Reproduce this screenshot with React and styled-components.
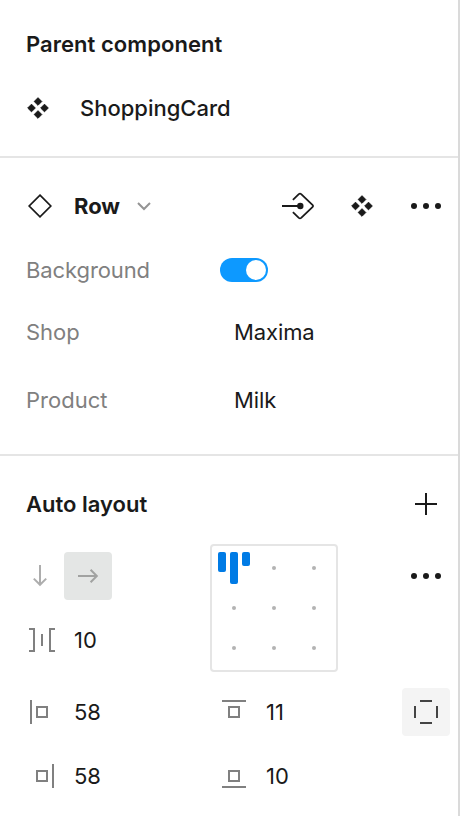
import React from "react";
import styled, { createGlobalStyle } from "styled-components";

const GlobalStyle = createGlobalStyle`
  *, *::before, *::after { box-sizing: border-box; }
  body { margin: 0; background: #fff; }
`;

const Panel = styled.main`
  width: 460px;
  height: 816px;
  overflow: hidden;
  background: #fff;
  border-right: 2px solid #dadada;
  color: #1a1a1a;
  font-family: Inter, sans-serif;
  font-size: 22px;
  line-height: 32px;
`;

const Section = styled.section`
  height: ${(p) => p.$height}px;
  padding-top: ${(p) => p.$top}px;
  border-bottom: ${(p) => (p.$last ? "none" : "2px solid #e5e5e5")};
`;

const Row = styled.div`
  display: flex;
  align-items: center;
  height: ${(p) => p.$height || 64}px;
  padding-left: ${(p) => (p.$icon ? 16 : 26)}px;
  padding-right: 8px;
`;

const Title = styled.h2`
  margin: 0;
  font-size: 22px;
  font-weight: 600;
  letter-spacing: ${(p) => p.$spacing || 0}px;
`;

const Name = styled.span`
  margin-left: ${(p) => p.$gap}px;
  font-weight: ${(p) => (p.$strong ? 700 : 500)};
`;

const Label = styled.span`
  width: ${(p) => p.$width}px;
  color: #808080;
  letter-spacing: ${(p) => p.$spacing || 0}px;
`;

const Value = styled.span`
  letter-spacing: -0.1px;
`;

const Actions = styled.div`
  display: flex;
  gap: ${(p) => p.$gap || 0}px;
  margin-left: auto;
`;

const IconButton = styled.button`
  display: flex;
  flex: none;
  align-items: center;
  justify-content: center;
  width: 48px;
  height: 48px;
  padding: 0;
  border: 0;
  border-radius: 4px;
  background: ${(p) => p.$fill || "transparent"};
`;

const Icon = styled.svg`
  display: block;
  flex: none;
  fill: none;
  stroke-width: 2;
`;

const Switch = styled.button`
  display: flex;
  justify-content: flex-end;
  width: 48px;
  height: 24px;
  padding: 2px;
  border: 0;
  border-radius: 12px;
  background: #0d99ff;
`;

const Knob = styled.span`
  width: 20px;
  height: 20px;
  border-radius: 50%;
  background: #fff;
`;

const LayoutGrid = styled.div`
  display: grid;
  grid-template-columns: 194px 192px 48px;
  grid-template-rows: 64px 64px 8px 64px 64px;
  align-items: center;
  padding: 8px 8px 0 16px;
`;

const Field = styled.div`
  display: flex;
  align-items: center;
  grid-column: ${(p) => p.$col};
  grid-row: ${(p) => p.$row};
`;

const FieldValue = styled.span`
  margin-left: ${(p) => p.$gap}px;
`;

const AlignmentBox = styled.div`
  grid-column: 2;
  grid-row: 1 / 3;
  display: grid;
  grid-template: repeat(3, 40px) / repeat(3, 40px);
  place-items: center;
  width: 128px;
  height: 128px;
  padding: 2px;
  border: 2px solid #e5e5e5;
  border-radius: 4px;
`;

const Dot = styled.span`
  width: 4px;
  height: 4px;
  border-radius: 50%;
  background: #b3b3b3;
`;

const Bars = styled.span`
  display: flex;
  align-items: flex-start;
  gap: 4px;
  height: 32px;
`;

const Bar = styled.span`
  width: 8px;
  height: ${(p) => p.$height}px;
  border-radius: 2px;
  background: #007be5;
`;

const Frame48 = ({ children, stroke = "#808080", ...rest }) => (
  <Icon width="48" height="48" viewBox="0 0 48 48" stroke={stroke} {...rest}>
    {children}
  </Icon>
);

const ComponentIcon = () => (
  <Icon width="24" height="24" viewBox="0 0 24 24">
    <path
      fill="#1a1a1a"
      stroke="#1a1a1a"
      strokeWidth="1"
      strokeLinejoin="round"
      d="M12 1.7l3.8 3.8-3.8 3.8-3.8-3.8zM5.5 8.2l3.8 3.8-3.8 3.8L1.7 12zM18.5 8.2l3.8 3.8-3.8 3.8-3.8-3.8zM12 14.7l3.8 3.8-3.8 3.8-3.8-3.8z"
    />
  </Icon>
);

const InstanceIcon = () => (
  <Frame48 stroke="#1a1a1a">
    <path strokeWidth="1.7" d="M24 13.2L34.8 24 24 34.8 13.2 24z" />
  </Frame48>
);

const ChevronIcon = () => (
  <Icon width="16" height="16" viewBox="0 0 16 16" stroke="#949494">
    <path d="M2 5l6 6 6-6" />
  </Icon>
);

const GoToMainIcon = () => (
  <Frame48 stroke="#1a1a1a">
    <path d="M8 24h18" />
    <path
      strokeWidth="1.8"
      d="M18.9 17.9l5.9-5.8q1.2-1 2.4 0L38.7 23.2q.8.8 0 1.6L27.2 35.9q-1.2 1-2.4 0l-5.9-5.8"
    />
    <circle cx="26.3" cy="24" r="3.2" fill="#1a1a1a" stroke="none" />
  </Frame48>
);

const MoreIcon = () => (
  <Frame48 stroke="none">
    <g fill="#1a1a1a">
      <circle cx="12" cy="24" r="3" />
      <circle cx="24" cy="24" r="3" />
      <circle cx="36" cy="24" r="3" />
    </g>
  </Frame48>
);

const PlusIcon = () => (
  <Frame48 stroke="#1a1a1a">
    <path d="M24 13v22M13 24h22" />
  </Frame48>
);

const ArrowDownIcon = () => (
  <Frame48 stroke="#adadad">
    <path d="M24 13v20M17.8 26.6l6.2 6.2 6.2-6.2" />
  </Frame48>
);

const ArrowRightIcon = () => (
  <Frame48 stroke="#a1a2a1">
    <path d="M14 24h19M26.6 17.8l6.2 6.2-6.2 6.2" />
  </Frame48>
);

const SpacingIcon = () => (
  <Frame48>
    <path d="M13 13h5v22h-5M39 13h-5v22h5M26 18v12" />
  </Frame48>
);

const PadLeftIcon = () => (
  <Frame48>
    <path d="M15 12v24M21 19h10v10H21z" />
  </Frame48>
);

const PadRightIcon = () => (
  <Frame48>
    <path d="M37 12v24M21 19h10v10H21z" />
  </Frame48>
);

const PadTopIcon = () => (
  <Frame48>
    <path d="M12 13h24M19 19h10v10H19z" />
  </Frame48>
);

const PadBottomIcon = () => (
  <Frame48>
    <path d="M12 35h24M19 19h10v10H19z" />
  </Frame48>
);

const SidesIcon = () => (
  <Frame48 stroke="#444">
    <path d="M18 13h12M18 35h12M13 18v12M35 18v12" />
  </Frame48>
);

const NameChevron = styled.span`
  display: flex;
  margin-left: 16px;
`;

export default function App() {
  return (
    <>
      <GlobalStyle />
      <Panel>
        <Section $height={158} $top={12}>
          <Row>
            <Title $spacing={0.05}>Parent component</Title>
          </Row>
          <Row>
            <ComponentIcon />
            <Name $gap={30}>ShoppingCard</Name>
          </Row>
        </Section>

        <Section $height={298} $top={16}>
          <Row $icon>
            <InstanceIcon />
            <Name $gap={10} $strong>Row</Name>
            <NameChevron>
              <ChevronIcon />
            </NameChevron>
            <Actions $gap={16}>
              <IconButton aria-label="Go to main component">
                <GoToMainIcon />
              </IconButton>
              <IconButton aria-label="Swap component">
                <ComponentIcon />
              </IconButton>
              <IconButton aria-label="More options">
                <MoreIcon />
              </IconButton>
            </Actions>
          </Row>
          <Row>
            <Label $width={194} $spacing={-0.1}>Background</Label>
            <Switch role="switch" aria-checked="true" aria-label="Background">
              <Knob />
            </Switch>
          </Row>
          <Row $height={60}>
            <Label $width={208}>Shop</Label>
            <Value>Maxima</Value>
          </Row>
          <Row $height={76}>
            <Label $width={208}>Product</Label>
            <Value>Milk</Value>
          </Row>
        </Section>

        <Section $height={360} $top={16} $last>
          <Row>
            <Title>Auto layout</Title>
            <Actions>
              <IconButton aria-label="Add">
                <PlusIcon />
              </IconButton>
            </Actions>
          </Row>
          <LayoutGrid>
            <Field $col={1} $row={1}>
              <IconButton aria-label="Vertical">
                <ArrowDownIcon />
              </IconButton>
              <IconButton aria-label="Horizontal" $fill="#e4e6e5">
                <ArrowRightIcon />
              </IconButton>
            </Field>
            <AlignmentBox>
              <Bars>
                <Bar $height={20} />
                <Bar $height={32} />
                <Bar $height={14} />
              </Bars>
              {Array.from({ length: 8 }, (_, i) => (
                <Dot key={i} />
              ))}
            </AlignmentBox>
            <Field $col={3} $row={1}>
              <IconButton aria-label="More layout options">
                <MoreIcon />
              </IconButton>
            </Field>
            <Field $col={1} $row={2}>
              <SpacingIcon />
              <FieldValue $gap={10}>10</FieldValue>
            </Field>
            <Field $col={1} $row={4}>
              <PadLeftIcon />
              <FieldValue $gap={10}>58</FieldValue>
            </Field>
            <Field $col={2} $row={4}>
              <PadTopIcon />
              <FieldValue $gap={8}>11</FieldValue>
            </Field>
            <Field $col={3} $row={4}>
              <IconButton aria-label="Individual padding" $fill="#f4f4f4">
                <SidesIcon />
              </IconButton>
            </Field>
            <Field $col={1} $row={5}>
              <PadRightIcon />
              <FieldValue $gap={10}>58</FieldValue>
            </Field>
            <Field $col={2} $row={5}>
              <PadBottomIcon />
              <FieldValue $gap={8}>10</FieldValue>
            </Field>
          </LayoutGrid>
        </Section>
      </Panel>
    </>
  );
}
